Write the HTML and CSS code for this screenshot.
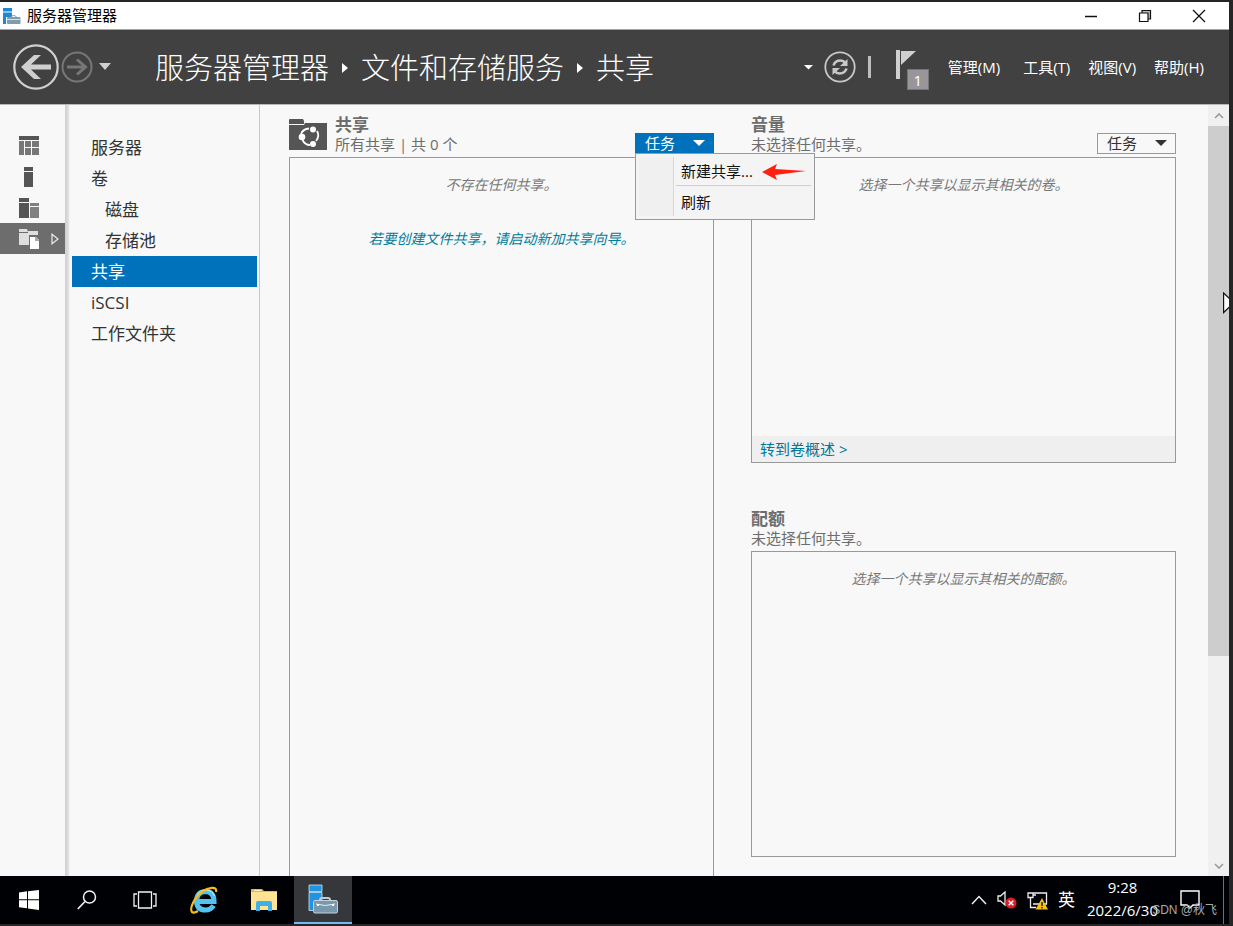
FILE: index.html
```html
<!DOCTYPE html>
<html lang="zh-CN">
<head>
<meta charset="utf-8">
<title>服务器管理器</title>
<link rel="stylesheet" href="styles.css">
</head>
<body>
<div class="screen">
  <header class="titlebar">
    <svg class="app-icon" width="18" height="18" viewBox="0 0 18 18" aria-hidden="true">
      <path fill="#1e88d6" d="M0 1h9v3H0zM0 6h9v4H3v7H0z"/><path fill="#8cc4ee" d="M0 4h9v2H0z"/>
      <path fill="none" stroke="#7f98a8" d="M7 10.500Q10.500 6.500 14 10.500"/>
      <rect x="4" y="10" width="13.500" height="7" rx="1" fill="#829bab"/><path stroke="#d6e0e6" d="M4 12.500h13"/>
    </svg>
    <span class="app-name">服务器管理器</span>
    <div class="window-buttons">
      <button class="win-btn" aria-label="最小化"><svg width="14" height="14" viewBox="0 0 14 14"><path stroke="#111" stroke-width="1.500" d="M1 7.500h12"/></svg></button>
      <button class="win-btn" aria-label="还原"><svg width="14" height="14" viewBox="0 0 14 14"><path fill="#bbb" stroke="#111" stroke-width="1.200" d="M4 4V1.500h8.500V10H10"/><path fill="#fff" stroke="#111" stroke-width="1.200" d="M1.500 4H10v8.500H1.500z"/></svg></button>
      <button class="win-btn" aria-label="关闭"><svg width="14" height="14" viewBox="0 0 14 14"><path stroke="#111" stroke-width="1.300" d="M1 1l12 12M13 1L1 13"/></svg></button>
    </div>
  </header>

  <div class="banner">
    <button class="icon-btn" aria-label="后退"><svg width="46" height="46" viewBox="0 0 46 46"><circle cx="23" cy="23" r="21.700" fill="none" stroke="#cfcfcf" stroke-width="2.200"/><path fill="#cfcfcf" d="M8 23l13-12h7l-10 9.500h20v5H18L28 35h-7z"/></svg></button>
    <button class="icon-btn forward" aria-label="前进"><svg width="32" height="32" viewBox="0 0 32 32"><circle cx="16" cy="16" r="14.500" fill="none" stroke="#777" stroke-width="2"/><path fill="none" stroke="#777" stroke-width="3" d="M6 16h18M16 8.500l8.500 7.500-8.500 7.500"/></svg></button>
    <button class="icon-btn history" aria-label="历史记录"><svg width="14" height="8" viewBox="0 0 14 8"><path fill="#cfcfcf" d="M1 0h12L7 7z"/></svg></button>
    <nav class="crumbs" aria-label="路径">
      <a href="#">服务器管理器</a>
      <svg width="6" height="10" viewBox="0 0 6 10"><path fill="#fff" d="M0 0l6 5-6 5z"/></svg>
      <a href="#">文件和存储服务</a>
      <svg width="6" height="10" viewBox="0 0 6 10"><path fill="#fff" d="M0 0l6 5-6 5z"/></svg>
      <a href="#">共享</a>
    </nav>
    <div class="banner-tools">
      <button class="icon-btn" aria-label="更多"><svg width="9" height="6" viewBox="0 0 9 6"><path fill="#fff" d="M0 1h9L4.500 5.500z"/></svg></button>
      <button class="icon-btn refresh" aria-label="刷新"><svg width="32" height="32" viewBox="0 0 32 32"><circle cx="16" cy="16" r="14.700" fill="none" stroke="#c8c8c8" stroke-width="1.800"/><path fill="none" stroke="#c8c8c8" stroke-width="2.600" d="M9.500 14.500q1.500-5 7-5 3 0 5 2.500M22.500 17.500q-1.500 5-7 5-3 0-5-2.500"/><path fill="#c8c8c8" d="M23.500 8v7h-7.500zM8.500 24v-7H16z"/></svg></button>
      <span class="rule"></span>
      <button class="icon-btn flag" aria-label="通知"><svg width="20" height="30" viewBox="0 0 20 30"><path fill="#d0d0d0" d="M0 0h4v29H0zM5 1h15L5 15z"/></svg><span class="badge">1</span></button>
      <nav class="menus" aria-label="菜单">
        <button class="menu-btn wide">管理(M)</button>
        <button class="menu-btn">工具(T)</button>
        <button class="menu-btn">视图(V)</button>
        <button class="menu-btn">帮助(H)</button>
      </nav>
    </div>
  </div>

  <div class="workspace">
    <nav class="rail" aria-label="仪表板">
      <a class="rail-item" href="#" aria-label="仪表板"><svg width="20" height="19" viewBox="0 0 20 19"><path fill="#555" d="M0 0h20v4H0z"/><path fill="#777" d="M0 5h5v14H0zM6 5h6v6H6zM13 5h7v6h-7zM6 12h6v7H6zM13 12h7v7h-7z"/></svg></a>
      <a class="rail-item" href="#" aria-label="本地服务器"><svg width="20" height="20" viewBox="0 0 20 20"><path fill="#555" d="M5 0h9v4H5zM5 5h9v15H5z"/></svg></a>
      <a class="rail-item" href="#" aria-label="所有服务器"><svg width="20" height="20" viewBox="0 0 20 20"><path fill="#555" d="M0 0h10v4H0zM0 5h10v15H0z"/><path fill="#808080" d="M11 5h9v3h-9zM11 9h9v11h-9z"/></svg></a>
      <a class="rail-item current" href="#" aria-label="文件和存储服务"><svg width="20" height="20" viewBox="0 0 20 20"><path fill="#dedede" d="M0 0h8l1 3H0zM0 4h9V2h10v4h-9v10H0z"/><path fill="#fff" d="M11 8h6l3 3v9h-9z"/><path fill="#aaa" d="M16 8h1l3 3v1h-4z"/></svg><svg class="rail-arrow" width="8" height="12" viewBox="0 0 8 12"><path fill="none" stroke="#e4e4e4" stroke-width="1.300" d="M1 1.200v9.600L7 6z"/></svg></a>
    </nav>

    <nav class="sidebar" aria-label="文件和存储服务">
      <a class="side-link" href="#">服务器</a>
      <a class="side-link" href="#">卷</a>
      <a class="side-link child" href="#">磁盘</a>
      <a class="side-link child" href="#">存储池</a>
      <a class="side-link selected" href="#" aria-current="page">共享</a>
      <a class="side-link" href="#">iSCSI</a>
      <a class="side-link" href="#">工作文件夹</a>
    </nav>

    <main class="tiles">
      <section class="tile">
        <div class="tile-head">
          <svg class="tile-icon" width="38" height="31" viewBox="0 0 38 31" aria-hidden="true"><path fill="#555" d="M0 1q0-1 1-1h13l1 2v3H0zM0 6h15l1-2h22v27H0z"/><g fill="none" stroke="#fff" stroke-width="1.800"><path d="M12 15q2-5 8-5.500M28 12q3 5-1 10M21 26q-5 0-7.500-5"/></g><circle cx="24" cy="10.500" r="3" fill="#fff"/><circle cx="13" cy="18" r="3.300" fill="#fff"/><circle cx="24" cy="25" r="3" fill="#fff"/></svg>
          <div class="tile-text"><h2>共享</h2><p>所有共享 | 共 0 个</p></div>
          <div class="task-wrap">
            <button class="task-btn open" aria-expanded="true">任务<svg width="12" height="6" viewBox="0 0 12 6"><path fill="currentColor" d="M0 0h12L6 6z"/></svg></button>
            <div class="dropdown" role="menu">
              <div class="gutter"></div>
              <div class="entries">
                <button role="menuitem">新建共享...<svg class="pointer" width="44" height="16" viewBox="0 0 44 16" aria-hidden="true"><path fill="#ff2010" d="M0 8L15 0l-2 5 31 2-31 4 2 5z"/></svg></button>
                <hr>
                <button role="menuitem">刷新</button>
              </div>
            </div>
          </div>
        </div>
        <div class="panel endless">
          <p class="empty">不存在任何共享。</p>
          <a class="wizard" href="#">若要创建文件共享，请启动新加共享向导。</a>
        </div>
      </section>

      <div class="column">
        <section class="tile">
          <div class="tile-head">
            <div class="tile-text"><h2>音量</h2><p>未选择任何共享。</p></div>
            <div class="task-wrap"><button class="task-btn">任务<svg width="12" height="6" viewBox="0 0 12 6"><path fill="currentColor" d="M0 0h12L6 6z"/></svg></button></div>
          </div>
          <div class="panel">
            <p class="empty">选择一个共享以显示其相关的卷。</p>
            <div class="panel-foot"><a href="#">转到卷概述 &gt;</a></div>
          </div>
        </section>
        <section class="tile">
          <div class="tile-head"><div class="tile-text"><h2>配额</h2><p>未选择任何共享。</p></div></div>
          <div class="panel"><p class="empty">选择一个共享以显示其相关的配额。</p></div>
        </section>
      </div>
    </main>

    <div class="scrollbar">
      <button class="scroll-btn" aria-label="向上滚动"><svg width="10" height="6" viewBox="0 0 10 6"><path fill="none" stroke="#999" stroke-width="1.600" d="M1 5l4-4 4 4"/></svg></button>
      <div class="thumb"></div>
      <div class="track"></div>
      <button class="scroll-btn" aria-label="向下滚动"><svg width="10" height="6" viewBox="0 0 10 6"><path fill="none" stroke="#999" stroke-width="1.600" d="M1 1l4 4 4-4"/></svg></button>
      <svg class="cursor" width="6" height="22" viewBox="0 0 6 22" aria-hidden="true"><path fill="#fff" stroke="#111" stroke-width="1.200" d="M.6 1v19.500L9 12.500V9z"/></svg>
    </div>
  </div>

  <footer class="taskbar">
    <button class="task" aria-label="开始"><svg width="20" height="20" viewBox="0 0 20 20"><path fill="#fff" d="M0 2.500l8-1.200v8H0zM9 1.200L20 0v9.300H9zM0 10.300h8v8l-8-1.100zM9 10.300h11V20L9 18.500z"/></svg></button>
    <button class="task" aria-label="搜索"><svg width="20" height="20" viewBox="0 0 20 20"><circle cx="12.500" cy="7" r="6" fill="none" stroke="#f2f2f2" stroke-width="1.500"/><path stroke="#f2f2f2" stroke-width="1.700" d="M8 11.500L.8 19"/></svg></button>
    <button class="task" aria-label="任务视图"><svg width="24" height="18" viewBox="0 0 24 18"><path fill="none" stroke="#f2f2f2" stroke-width="1.300" d="M5.500 1h13v16h-13zM4 3H1v12h3M20 3h3v12h-3"/></svg></button>
    <button class="task app" aria-label="Internet Explorer"><svg width="28" height="28" viewBox="0 0 28 28"><path fill="none" stroke="#52c3f1" stroke-width="5" d="M6.500 15.500H24Q24 5.500 15.500 5.500 6.500 6 6.500 15.500 7 24 15.500 24q5.500 0 8-4.500"/><path fill="none" stroke="#d8f4ff" stroke-width="1" d="M7 9q3-5 8.500-5 7 0 9 6"/><path fill="none" stroke="#f5bd15" stroke-width="2.200" d="M26 6q1-4.500-4-4.200Q11 3 4.500 14-.5 23 2 26q2 1.500 6-1"/></svg></button>
    <button class="task app" aria-label="文件资源管理器"><svg width="26" height="22" viewBox="0 0 26 22"><path fill="#e8b934" d="M0 0h11l2 2h13v5H0z"/><path fill="#ffe394" d="M0 3h26v18H0z"/><path fill="#fff1c2" d="M3 1h7v1H3z"/><path fill="#3eb1e8" d="M5 22v-8q0-2 2-2h12q2 0 2 2v8h-4v-5H9v5z"/></svg></button>
    <button class="task active" aria-label="服务器管理器"><svg width="30" height="30" viewBox="0 0 30 30"><path fill="#1f94e5" stroke="#c8e6fa" stroke-width=".8" d="M1 1h13v6.500H1zM1 8.500h13v18H1z"/><path fill="none" stroke="#bccbd4" stroke-width="2" d="M12 16q0-2 2-2h6q2 0 2 2"/><rect x="5.500" y="16.500" width="24" height="12.500" rx="1.500" fill="#7898ab" stroke="#c4d1d9"/><path fill="none" stroke="#e6eef2" d="M8 20q9 3 19 0"/><path stroke="#fff" stroke-width="2" d="M10 20v2M25 20v2"/></svg></button>
    <div class="tray">
      <button class="icon-btn" aria-label="显示隐藏的图标"><svg width="16" height="10" viewBox="0 0 16 10"><path fill="none" stroke="#eee" stroke-width="1.500" d="M1 9l7-7.500L15 9"/></svg></button>
      <button class="icon-btn" aria-label="音量"><svg width="20" height="18" viewBox="0 0 20 18"><path fill="none" stroke="#eee" stroke-width="1.300" d="M1 5h2.500L8 1v13l-4.500-4H1z"/><circle cx="14" cy="12" r="5.500" fill="#dc1e28"/><path stroke="#fff" stroke-width="1.500" d="M11.700 9.700l4.600 4.600M16.300 9.700l-4.600 4.600"/></svg></button>
      <button class="icon-btn" aria-label="网络"><svg width="21" height="19" viewBox="0 0 21 19"><path fill="none" stroke="#eee" stroke-width="1.300" d="M6 2h13.500v11H6M1 2h5v4.500H1zM3.500 7v9.500H9M6 4h3"/><path fill="#fbbf12" d="M15 7l6 11.500H8.500z"/><path stroke="#222" stroke-width="1.500" d="M15 11v4M15 16v1.500"/></svg></button>
      <button class="ime">英</button>
      <button class="clock"><span>9:28</span><span>2022/6/30</span></button>
      <button class="icon-btn notes" aria-label="通知中心"><svg width="20" height="20" viewBox="0 0 20 20"><path fill="none" stroke="#fff" stroke-width="1.400" d="M1 1h18v14h-6l-3 3-3-3H1z"/></svg></button>
      <span class="watermark">SDN @秋飞</span>
    </div>
  </footer>
</div>
</body>
</html>
```

FILE: styles.css
```css
* { box-sizing: border-box; }
body {
  margin: 0;
  background: #262627;
  color: #333;
  font: 15px/20px "Open Sans", "Noto Sans CJK SC", sans-serif;
}
h2, p { margin: 0; }
a { color: inherit; text-decoration: none; }
svg { display: block; flex: none; }
button {
  padding: 0;
  border: 0;
  background: none;
  color: inherit;
  font: inherit;
}
.screen {
  display: flex;
  flex-direction: column;
  height: 100vh;
  padding: 2px 4px 2px 0;
}

.titlebar {
  display: flex;
  align-items: center;
  height: 28px;
  padding-left: 3px;
  gap: 6px;
  background: #fff;
  border-bottom: 1px solid #a5a5a5;
  color: #000;
}
.app-name { line-height: 18px; padding-bottom: 2px; }
.window-buttons { display: flex; margin-left: auto; padding-right: 3px; }
.win-btn { display: grid; place-items: center; width: 54px; height: 24px; }

.banner {
  display: flex;
  align-items: center;
  height: 75px;
  padding: 0 25px 0 13px;
  background: #414141;
  border-bottom: 1px solid #b8b8b8;
  color: #fff;
}
.forward { margin-left: 2px; }
.history { margin-left: 5px; }
.crumbs {
  display: flex;
  align-items: center;
  gap: 13px;
  margin-left: 43px;
  padding-top: 2px;
  font-size: 29px;
  line-height: 40px;
  font-weight: 300;
  white-space: nowrap;
}
.banner-tools { display: flex; align-items: center; margin-left: auto; }
.refresh { margin-left: 11px; }
.rule { width: 3px; height: 22px; margin-left: 12px; background: #bdbdbd; }
.flag { position: relative; height: 40px; margin: 6px 0 0 25px; padding-right: 13px; }
.flag svg { margin-bottom: 10px; }
.badge {
  position: absolute;
  right: 0;
  bottom: 0;
  width: 22px;
  height: 21px;
  background: #98969a;
  border: 1px solid #77757a;
}
.menus { display: flex; gap: 18px; margin-left: 19px; white-space: nowrap; }
.wide { margin-right: 5px; }

.workspace { display: flex; flex: 1; min-height: 0; background: #f8f8f8; }
.rail {
  width: 65px;
  padding-top: 25px;
  background: #f8f8f8;
}
.rail-item {
  display: flex;
  align-items: center;
  justify-content: space-between;
  height: 31px;
  padding: 0 6px 0 19px;
}
.rail-item.current { background: #6d6d6d; }
.sidebar {
  width: 195px;
  padding: 27px 2px 0 7px;
  border-right: 1px solid #c8c8c8;
  background: linear-gradient(90deg, #cfcfcf, #dcdcdc 3px, #f8f8f8 5px);
  font-size: 17px;
}
.side-link { display: block; padding-left: 19px; line-height: 31px; }
.side-link.child { padding-left: 33px; }
.side-link.selected { background: #0072bc; color: #fff; }

.tiles {
  display: grid;
  grid-template-columns: 1fr 1fr;
  gap: 37px;
  flex: 1;
  padding: 0 32px 0 29px;
}
.tile { display: flex; flex: 1; flex-direction: column; min-height: 0; }
.column { display: flex; flex-direction: column; gap: 36px; padding-bottom: 19px; }
.tile-head { display: flex; height: 52px; padding-top: 9px; color: #6d6d6d; }
.tile-icon { margin: 5px 8px 0 0; }
.tile-head h2 { font-size: 17px; line-height: 20px; font-weight: 700; }
.tile-head p { line-height: 18px; }
.tile-text { padding-top: 1px; }
.task-wrap { position: relative; margin: 19px 0 0 auto; }
.task-btn {
  display: flex;
  align-items: center;
  justify-content: space-between;
  width: 79px;
  height: 21px;
  padding: 0 8px 2px 9px;
  border: 1px solid #999;
  color: #333;
  line-height: 16px;
}
.task-btn.open { border-color: #0072bc; background: #0072bc; color: #fff; }
.dropdown {
  position: absolute;
  z-index: 2;
  top: 20px;
  left: 0;
  display: flex;
  width: 180px;
  padding: 3px;
  background: #f4f4f4;
  border: 1px solid #999;
  color: #111;
}
.gutter { width: 35px; background: #f0f0f0; border-right: 1px solid #d8d8d8; }
.entries { flex: 1; padding-left: 2px; }
.entries button { display: flex; align-items: center; width: 100%; height: 28px; padding: 0 0 1px 5px; }
.entries hr { margin: 0 0 2px; border: 0; border-top: 1px solid #d0d0d0; }
.pointer { margin: 3px 0 0 9px; }
.panel {
  display: flex;
  flex: 1;
  flex-direction: column;
  align-items: center;
  padding-top: 17px;
  border: 1px solid #999;
}
.panel.endless { border-bottom: 0; }
.empty, .wizard { font-size: 14px; font-style: italic; color: #777; }
.wizard { margin-top: 34px; color: #007c9d; }
.panel-foot {
  align-self: stretch;
  margin-top: auto;
  padding: 3px 8px;
  background: #efefef;
  color: #00789a;
}

.scrollbar { position: relative; display: flex; flex-direction: column; width: 21px; background: #f0f0f0; }
.scroll-btn { display: grid; place-items: center; height: 21px; }
.thumb { flex: 530; background: #cdcdcd; }
.track { flex: 199; }
.cursor { position: absolute; right: 0; top: 187px; }

.taskbar { display: flex; height: 48px; background: #000105; color: #fff; }
.task { display: grid; place-items: center; width: 58px; }
.task.app { width: 60px; }
.task.active { background: #36373a; border-bottom: 2px solid #76b9ed; }
.tray {
  position: relative;
  display: flex;
  align-items: center;
  gap: 10px;
  margin-left: auto;
  padding-right: 29px;
  box-shadow: inset -5px 0 #000105, inset -6px 0 #707070;
}
.ime { font-size: 17px; }
.clock { display: flex; flex-direction: column; gap: 3px; margin-left: 2px; padding-bottom: 3px; text-align: center; }
.notes { margin-left: 12px; }
.watermark {
  position: absolute;
  right: 12px;
  bottom: 4px;
  color: #aaa;
  font-family: "Liberation Sans", "Noto Sans CJK SC", sans-serif;
  font-size: 12px;
}
```
